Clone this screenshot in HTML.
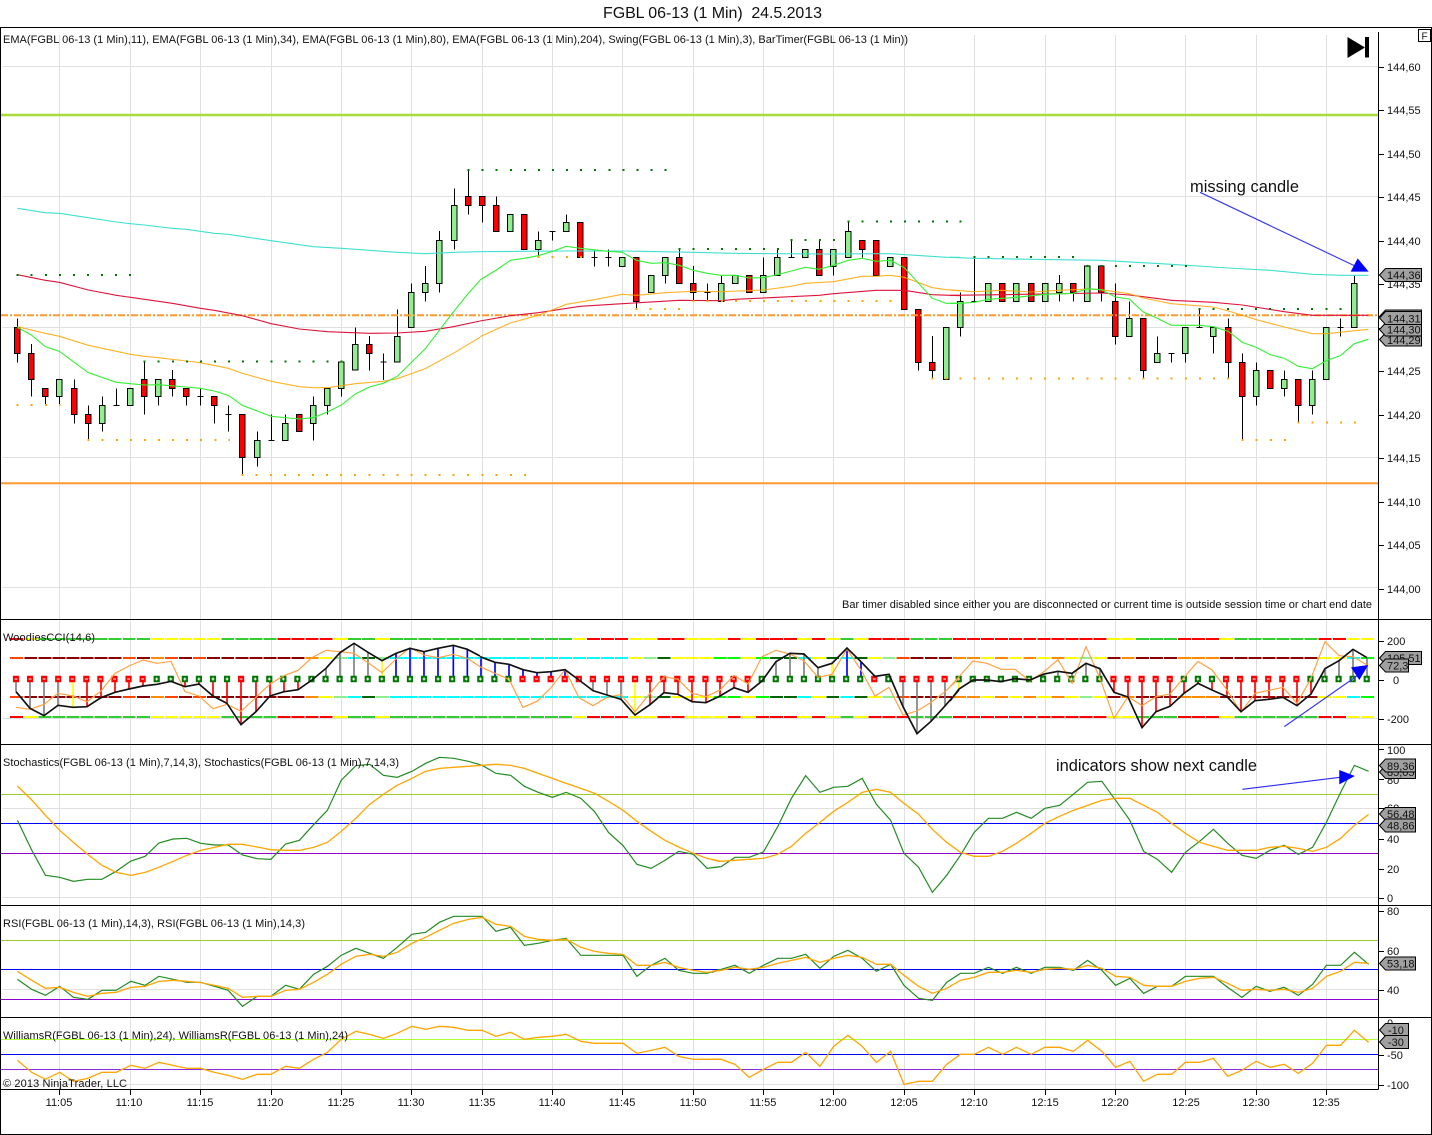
<!DOCTYPE html>
<html><head><meta charset="utf-8"><title>FGBL 06-13 (1 Min) 24.5.2013</title>
<style>
html,body{margin:0;padding:0;background:#fff;width:1432px;height:1135px;overflow:hidden}
svg{display:block}
text{font-family:"Liberation Sans",sans-serif;font-size:11px;fill:#111;white-space:pre}
path{fill:none}
.ns path{vector-effect:non-scaling-stroke}
.w{stroke:#000;stroke-width:3;shape-rendering:crispEdges}
.r{fill:#f00;stroke:#000;stroke-width:3;shape-rendering:crispEdges}
.g{fill:#90ee90;stroke:#000;stroke-width:3;shape-rendering:crispEdges}
.t{fill:#a0a0a0;stroke:#000;stroke-width:1}
.cy{stroke:#40e0d0;stroke-width:3.3}
.cr{stroke:#dc143c;stroke-width:3.3}
.or{stroke:#ffa500;stroke-width:3.3;opacity:.85}
.li{stroke:#33f033;stroke-width:3.3}
.dg{stroke:#007700;stroke-width:6;stroke-dasharray:6 36.21;shape-rendering:crispEdges}
.do{stroke:#ffa500;stroke-width:6;stroke-dasharray:6 36.21;shape-rendering:crispEdges}
.hg{stroke:#808080;stroke-width:5}.hy{stroke:#ff0;stroke-width:5}.hr{stroke:#f00;stroke-width:5}.hb{stroke:#00f;stroke-width:5}
.bk{stroke:#111;stroke-width:5}
.to{stroke:#ffa040;stroke-width:3.5}
.sg{stroke:#228b22;stroke-width:1.2}
.so{stroke:#ffa500;stroke-width:1.3}
.d{stroke-dasharray:.92 .08;stroke-width:2;shape-rendering:crispEdges}
</style></head><body>
<svg width="1432" height="1135" viewBox="0 0 1432 1135" xmlns="http://www.w3.org/2000/svg">
<rect width="1432" height="1135" fill="#fff"/>
<text x="603" y="18" textLength="219" lengthAdjust="spacing" style="font-size:16px">FGBL 06-13 (1 Min)  24.5.2013</text>

<!-- grid -->
<path stroke="#e0e0e0" d="M59.5 35V1089M130.5 35V1089M200.5 35V1089M271.5 35V1089M341.5 35V1089M411.5 35V1089M482.5 35V1089M552.5 35V1089M622.5 35V1089M693.5 35V1089M763.5 35V1089M833.5 35V1089M904.5 35V1089M974.5 35V1089M1045.5 35V1089M1115.5 35V1089M1185.5 35V1089M1256.5 35V1089M1326.5 35V1089"/>
<path stroke="#e0e0e0" d="M2 66.5H1378M2 196.5H1378M2 327.5H1378M2 457.5H1378M2 587.5H1378M2 718.5H1378M2 808.5H1378M2 897.5H1378M2 989.5H1378M2 1084.5H1378"/>

<!-- candles 1 -->
<g transform="translate(0,140) scale(.33333)">
<path class="w" d="M52 535V668M94 612V770M136 745V795M178 718V795M223 718V850M265 796V897M307 769V875M349 745V796M340 796H358M433 666V823M475 718V797M517 690V770M559 745V797M601 745V797M592 769H610M643 769V850M685 796V875M676 823H694M727 823V1005M772 875V980M814 823V901M805 901H823M856 823V901M940 769V901M982 745V823M1024 666V770M1066 562V690M1108 588V692M1150 640V720M1141 666H1159M1192 508V666M1234 430V562M1276 378V485M1318 273V458M1363 145V328M1405 90V224"/>
<path class="r" d="M44 562h16v78h-16zM86 640h16v78h-16zM128 745h16v24h-16zM215 745h16v78h-16zM257 823h16v27h-16zM425 718h16v51h-16zM509 718h16v27h-16zM551 745h16v24h-16zM635 769h16v27h-16zM719 823h16v129h-16zM890 823h16v52h-16zM1100 613h16v27h-16zM1397 169h16v27h-16z"/>
<path class="g" d="M170 718h16v51h-16zM299 796h16v54h-16zM383 745h16v51h-16zM467 718h16v51h-16zM764 901h16v51h-16zM848 850h16v51h-16zM932 796h16v54h-16zM974 745h16v51h-16zM1016 666h16v79h-16zM1058 613h16v77h-16zM1184 589h16v77h-16zM1226 457h16v105h-16zM1268 430h16v27h-16zM1310 301h16v129h-16zM1355 196h16v105h-16z"/>
</g>
<!-- candles 2 -->
<g transform="translate(480,140) scale(.33333)">
<path class="w" d="M7 196V248M49 169V196M175 274V350M217 274V302M208 274H226M259 223V247M343 328V380M334 352H352M385 328V380M376 352H394M469 485V505M556 406V431M598 325V352M640 378V483M682 430V483M673 457H691M724 406V485M850 352V406M892 325V352M934 300V352M925 352H943M1018 300V328M1060 379V406M1105 245V274M1147 328V352M1315 667V692M1357 588V716"/>
<path class="r" d="M-1 169h16v27h-16zM41 196h16v78h-16zM125 223h16v105h-16zM293 247h16v105h-16zM461 352h16v133h-16zM590 352h16v78h-16zM632 430h16v27h-16zM800 406h16v51h-16zM1010 328h16v78h-16zM1139 301h16v27h-16zM1181 301h16v105h-16zM1265 352h16v156h-16zM1307 508h16v159h-16zM1349 667h16v24h-16z"/>
<path class="g" d="M83 223h16v51h-16zM167 301h16v27h-16zM251 247h16v27h-16zM419 352h16v27h-16zM506 406h16v51h-16zM548 352h16v54h-16zM716 430h16v54h-16zM758 406h16v24h-16zM842 406h16v51h-16zM884 352h16v54h-16zM968 328h16v24h-16zM1052 328h16v51h-16zM1097 274h16v78h-16zM1223 352h16v27h-16zM1391 562h16v156h-16z"/>
</g>
<!-- candles 3 -->
<g transform="translate(950,140) scale(.33333)">
<path class="w" d="M31 457V484M31 562V590M73 352V484M64 484H82M328 405V430M328 457V485M370 457V485M454 457V485M496 430V484M496 589V614M538 484V535M580 691V715M622 589V640M664 640V668M655 640H673M706 640V668M748 505V562M739 562H757M790 589V640M835 535V562M835 667V716M877 640V667M877 769V897M919 667V691M919 769V797M1003 691V718M1003 745V770M1045 796V848M1087 691V718M1087 796V823M1171 535V590M1162 562H1180M1213 405V430"/>
<path class="g" d="M23 484h16v78h-16zM107 430h16v54h-16zM191 430h16v54h-16zM278 430h16v54h-16zM320 430h16v27h-16zM404 378h16v106h-16zM530 535h16v54h-16zM614 640h16v27h-16zM698 562h16v78h-16zM782 562h16v27h-16zM911 691h16v78h-16zM995 718h16v27h-16zM1079 718h16v78h-16zM1121 562h16v156h-16zM1205 430h16v132h-16z"/>
<path class="r" d="M149 430h16v54h-16zM236 430h16v54h-16zM362 430h16v27h-16zM446 378h16v79h-16zM488 484h16v105h-16zM572 535h16v156h-16zM827 562h16v105h-16zM869 667h16v102h-16zM953 691h16v54h-16zM1037 718h16v78h-16z"/>
</g>

<!-- levels -->
<path stroke="#a8dc38" stroke-width="2.6" d="M1 115H1378"/>
<path stroke="#ff9a30" stroke-width="2" d="M1 483.3H1378"/>
<path stroke="#ff9a30" stroke-width="2" stroke-dasharray="7 2 2 2" d="M1 315.3H1378"/>

<!-- EMAs + dots -->
<g transform="translate(0,140) scale(.33333)">
<path class="cy" d="M52 205L136 218 178 220 265 233 349 246 391 251 433 255 517 265 559 268 601 274 643 280 685 283 772 296 814 302 898 314 940 320 1024 325 1108 331 1192 337 1276 341 1363 337 1440 335"/>
<path class="cr" d="M52 404L136 421 178 427 265 450 349 466 433 478 517 490 601 505 643 511 727 527 814 551 898 567 982 575 1108 580 1192 579 1276 574 1360 560 1440 543"/>
<path class="or" d="M52 560L136 580 178 589 265 616 349 634 391 643 433 649 475 653 559 663 601 668 685 685 727 700 814 724 898 740 940 743 982 743 1066 731 1150 724 1192 716 1276 686 1360 640 1440 592"/>
<path class="li" d="M52 562L94 585 136 620 178 634 265 698 349 727 391 731 433 735 475 734 559 741 601 745 643 753 685 766 727 796 814 829 898 837 940 833 982 816 1024 795 1066 762 1108 741 1150 730 1192 709 1276 626 1360 516 1405 460 1440 421"/>
<path class="dg" d="M50 405H396M431 665H1030M1403 90H1409"/>
<path class="do" d="M50 795H182M263 900H690M725 1005H1410"/>
</g>
<g transform="translate(480,140) scale(.33333)">
<path class="cy" d="M0 335L259 333 427 333 640 337 760 340 1018 342 1231 341 1400 352 1440 352"/>
<path class="cr" d="M0 543L91 527 175 518 301 499 427 491 598 481 724 482 766 478 1018 466 1060 461 1189 451 1273 451 1357 464 1440 467"/>
<path class="or" d="M0 590L91 549 175 526 259 493 343 479 427 463 469 466 556 458 640 454 724 455 850 450 934 439 976 430 1060 425 1147 409 1189 409 1231 406 1273 412 1357 443 1399 449 1440 452"/>
<path class="li" d="M0 420L49 390 91 361 133 355 175 347 217 334 259 319 301 325 385 334 427 337 469 361 514 370 556 368 598 376 640 391 682 400 724 406 766 406 808 414 850 413 892 404 934 393 976 382 1018 388 1060 376 1105 361 1147 355 1189 364 1231 361 1273 383 1357 475 1399 490 1440 490"/>
<path class="dg" d="M5 90H562M596 327H898M932 300H1066M1103 245H1405"/>
<path class="do" d="M5 1005H139M173 351H307M467 507H604M638 483H1237M1355 716H1405"/>
</g>
<g transform="translate(950,140) scale(.33333)">
<path class="cy" d="M0 352L73 355 244 358 454 361 664 373 835 384 961 391 1087 403 1171 406 1255 406"/>
<path class="cr" d="M0 466L160 464 454 459 538 465 664 481 790 487 877 495 1003 515 1087 526 1255 526"/>
<path class="or" d="M0 450L73 455 157 451 244 456 328 451 412 447 454 449 538 461 580 474 664 491 790 501 835 513 919 539 1003 561 1087 581 1129 581 1255 568"/>
<path class="li" d="M0 490L31 490 73 487 115 478 199 472 286 463 370 460 412 446 454 449 496 471 538 477 580 516 622 535 664 556 748 556 790 560 835 574 877 607 919 622 961 644 1003 655 1045 679 1087 686 1129 662 1171 647 1213 611 1255 598"/>
<path class="dg" d="M29 245H36M71 351H376M410 378H712M746 507H1177"/>
<path class="do" d="M29 716H840M875 900H1008M1043 848H1218"/>
<path stroke="#3a3af0" stroke-width="3.5" d="M750 157L1215 378"/>
<path style="fill:#00f" d="M1223 355L1256 395 1202 395Z"/>
</g>

<!-- CCI rows -->
<g transform="translate(16.7,0) scale(14.07,1)">
<g transform="translate(0,639)">
<path class="d" stroke="#f00" d="M-.46 0H.46M18.54 0H22.46M40.54 0H43.46M45.54 0H47.46M50.54 0H51.46M52.54 0H55.46M56.54 0H57.46M60.54 0H63.46M66.54 0H77.46M82.54 0H85.46M92.54 0H94.46"/>
<path class="d" stroke="#ff0" d="M.54 0H1.46M9.54 0H14.46M22.54 0H23.46M25.54 0H26.46M39.54 0H40.46M43.54 0H45.46M47.54 0H50.46M51.54 0H52.46M55.54 0H56.46M57.54 0H58.46M59.54 0H60.46M77.54 0H79.46M85.54 0H86.46M94.54 0H96.46"/>
<path class="d" stroke="#32cd32" d="M1.54 0H9.46M14.54 0H18.46M23.54 0H25.46M26.54 0H39.46M58.54 0H59.46M63.54 0H66.46M79.54 0H82.46M86.54 0H92.46"/>
</g>
<g transform="translate(0,717)">
<path class="d" stroke="#f00" d="M-.46 0H.46M18.54 0H22.46M40.54 0H43.46M45.54 0H47.46M50.54 0H51.46M52.54 0H55.46M56.54 0H57.46M60.54 0H63.46M66.54 0H77.46M82.54 0H85.46M92.54 0H94.46"/>
<path class="d" stroke="#ff0" d="M.54 0H1.46M9.54 0H14.46M22.54 0H23.46M25.54 0H26.46M39.54 0H40.46M43.54 0H45.46M47.54 0H50.46M51.54 0H52.46M55.54 0H56.46M57.54 0H58.46M59.54 0H60.46M77.54 0H79.46M85.54 0H86.46M94.54 0H96.46"/>
<path class="d" stroke="#32cd32" d="M1.54 0H9.46M14.54 0H18.46M23.54 0H25.46M26.54 0H39.46M58.54 0H59.46M63.54 0H66.46M79.54 0H82.46M86.54 0H92.46"/>
</g>
<g transform="translate(0,658)">
<path class="d" stroke="#ff4500" d="M-.46 0H.46M7.54 0H8.46M10.54 0H11.46M12.54 0H13.46M62.54 0H63.46"/>
<path class="d" stroke="#8b0000" d="M.54 0H7.46M8.54 0H9.46M11.54 0H12.46M13.54 0H20.46M63.54 0H66.46M77.54 0H78.46M79.54 0H82.46M85.54 0H92.46"/>
<path class="d" stroke="#ff8c00" d="M9.54 0H10.46M20.54 0H21.46M66.54 0H68.46M69.54 0H70.46M71.54 0H72.46M73.54 0H74.46M78.54 0H79.46M82.54 0H85.46"/>
<path class="d" stroke="#ff0" d="M21.54 0H22.46M43.54 0H44.46M46.54 0H49.46M51.54 0H52.46M56.54 0H57.46M60.54 0H61.46M68.54 0H69.46M70.54 0H71.46M72.54 0H73.46M74.54 0H75.46M76.54 0H77.46M92.54 0H94.46"/>
<path class="d" stroke="#90ee90" d="M22.54 0H23.46M25.54 0H26.46M44.54 0H45.46M61.54 0H62.46M75.54 0H76.46"/>
<path class="d" stroke="#0ff" d="M23.54 0H24.46M26.54 0H43.46M55.54 0H56.46M58.54 0H59.46M94.54 0H95.46"/>
<path class="d" stroke="#006400" d="M24.54 0H25.46M45.54 0H46.46M53.54 0H55.46M57.54 0H58.46M59.54 0H60.46"/>
<path class="d" stroke="#0f0" d="M49.54 0H51.46M52.54 0H53.46M95.54 0H96.46"/>
</g>
<g transform="translate(0,697)">
<path class="d" stroke="#ff4500" d="M-.46 0H.46M7.54 0H8.46M10.54 0H11.46M12.54 0H13.46M62.54 0H63.46"/>
<path class="d" stroke="#8b0000" d="M.54 0H7.46M8.54 0H9.46M11.54 0H12.46M13.54 0H20.46M63.54 0H66.46M77.54 0H78.46M79.54 0H82.46M85.54 0H92.46"/>
<path class="d" stroke="#ff8c00" d="M9.54 0H10.46M20.54 0H21.46M66.54 0H68.46M69.54 0H70.46M71.54 0H72.46M73.54 0H74.46M78.54 0H79.46M82.54 0H85.46"/>
<path class="d" stroke="#ff0" d="M21.54 0H22.46M43.54 0H44.46M46.54 0H49.46M51.54 0H52.46M56.54 0H57.46M60.54 0H61.46M68.54 0H69.46M70.54 0H71.46M72.54 0H73.46M74.54 0H75.46M76.54 0H77.46M92.54 0H94.46"/>
<path class="d" stroke="#90ee90" d="M22.54 0H23.46M25.54 0H26.46M44.54 0H45.46M61.54 0H62.46M75.54 0H76.46"/>
<path class="d" stroke="#0ff" d="M23.54 0H24.46M26.54 0H43.46M55.54 0H56.46M58.54 0H59.46M94.54 0H95.46"/>
<path class="d" stroke="#006400" d="M24.54 0H25.46M45.54 0H46.46M53.54 0H55.46M57.54 0H58.46M59.54 0H60.46"/>
<path class="d" stroke="#0f0" d="M49.54 0H51.46M52.54 0H53.46M95.54 0H96.46"/>
</g>
</g>

<!-- CCI histograms + lines -->
<g transform="translate(0,620) scale(.33333)">
<path class="hg" d="M48 176V215M90 176V265M132 176V287M174 176V256M936 176V180M978 176V145M1020 176V97M1062 176V70M1104 176V97"/>
<path class="hy" d="M219 176V262M1146 176V122"/>
<path class="hr" d="M261 176V260M303 176V233M345 176V217M387 176V207M429 176V198M555 176V200M597 176V192M639 176V228M681 176V250M723 176V313M768 176V275M810 176V228M852 176V215M894 176V209"/>
<path class="hb" d="M1188 176V100M1230 176V85M1272 176V95M1314 176V85M1360 176V76M1402 176V88"/>
</g>
<g transform="translate(480,620) scale(.33333)">
<path class="hb" d="M3 176V115M45 176V127M87 176V133M129 176V149M171 176V158M213 176V155M255 176V149M1101 176V84M1143 176V125"/>
<path class="hg" d="M339 176V212M381 176V225M423 176V238M888 176V125M930 176V100M972 176V102M1014 176V143M1269 176V260M1311 176V341M1353 176V304M1395 176V258"/>
<path class="hy" d="M465 176V285M1056 176V130M1437 176V210"/>
<path class="hr" d="M510 176V254M552 176V218M594 176V223M636 176V245M678 176V248M720 176V228M762 176V203M804 176V217"/>
</g>
<g transform="translate(950,620) scale(.33333)">
<path class="hy" d="M27 176V207"/>
<path class="hg" d="M282 176V162M324 176V154M366 176V160M408 176V130M450 176V146M1125 176V146M1167 176V122M1209 176V88M1251 176V113"/>
<path class="hr" d="M492 176V217M534 176V231M576 176V323M618 176V275M660 176V259M702 176V220M744 176V190M786 176V210M831 176V230M873 176V275M915 176V242M957 176V238M999 176V232M1041 176V257M1083 176V222"/>
</g>

<!-- markers -->
<g transform="translate(16,679) scale(14.07,1)">
<path stroke="#f00" stroke-width="6.5" stroke-dasharray=".44 .56" d="M-.22 0H9.22M15.78 0H16.22M35.78 0H52.22M60.78 0H61.22M62.78 0H66.22M77.78 0H82.22M85.78 0H91.22"/>
<path stroke="#007700" stroke-width="6.5" stroke-dasharray=".44 .56" d="M9.78 0H15.22M16.78 0H35.22M52.78 0H60.22M61.78 0H62.22M66.78 0H77.22M82.78 0H85.22M91.78 0H96.22"/>
<path stroke="#fff" stroke-width="1" stroke-dasharray=".2 .8" d="M-.1 0H96.1"/>
<path stroke="#fff" stroke-width="3" stroke-dasharray=".07 .93" d="M9.965 0H15.04M16.965 0H35.04M52.965 0H60.04M61.965 0H62.04M66.965 0H77.04M82.965 0H85.04M91.965 0H96.04"/>
</g>

<g transform="translate(0,620) scale(.33333)">
<path class="to" d="M48 262L90 268 132 253 174 220 219 228 261 245 303 213 345 160 387 138 429 120 471 130 513 124 555 215 597 228 639 266 681 253 723 274 768 232 810 192 852 167 894 151 936 113 978 91 1020 95 1062 100 1104 128 1146 158 1188 117 1230 83 1272 105 1314 113 1360 103 1402 115 1440 140"/>
<path class="bk" d="M48 215L90 265 132 287 174 256 219 262 261 260 303 233 345 217 387 207 429 198 471 193 513 184 555 200 597 192 639 228 681 250 723 314 768 275 810 228 852 215 894 209 936 180 978 145 1020 98 1062 70 1104 97 1146 122 1188 100 1230 85 1272 95 1314 85 1360 76 1402 88 1440 108"/>
</g>
<g transform="translate(480,620) scale(.33333)">
<path class="to" d="M0 140L45 160 87 178 129 262 171 244 213 203 255 149 297 233 339 257 381 232 423 224 465 275 510 220 552 170 594 178 636 220 678 230 720 210 762 166 804 192 846 110 888 91 930 102 972 123 1014 172 1056 163 1101 87 1143 150 1185 228 1227 202 1269 285 1311 273 1353 247 1395 215 1437 175"/>
<path class="bk" d="M0 110L45 127 87 133 129 149 171 158 213 155 255 149 297 180 339 212 381 225 423 238 465 285 510 254 552 218 594 223 636 245 678 248 720 228 762 203 804 217 846 183 888 125 930 100 972 102 1014 143 1056 130 1101 84 1143 125 1185 169 1227 163 1269 260 1311 341 1353 304 1395 258 1437 210"/>
</g>
<g transform="translate(950,620) scale(.33333)">
<path class="to" d="M0 200L27 170 69 123 111 130 153 148 195 148 240 183 282 155 324 119 366 190 408 80 450 175 492 295 534 230 576 257 618 230 660 222 702 172 744 124 786 150 831 210 873 277 915 220 957 211 999 202 1041 250 1083 175 1125 65 1167 107 1209 110 1251 135"/>
<path class="bk" d="M0 243L27 207 69 180 111 180 153 185 195 176 240 180 282 162 324 154 366 160 408 130 450 146 492 217 534 231 576 323 618 275 660 259 702 220 744 190 786 210 831 230 873 275 915 242 957 238 999 232 1041 257 1083 222 1125 146 1167 122 1209 88 1251 113"/>
<path stroke="#3a3af0" stroke-width="3.5" d="M1003 320L1225 165"/>
<path style="fill:#00f" d="M1203 142L1255 135 1228 180Z"/>
</g>

<!-- lower panel levels -->
<path stroke="#9acd32" d="M1 794.5H1378M1 940.5H1378"/>
<path stroke="#00f" d="M1 823.5H1378M1 969.5H1378M1 1054.5H1378"/>
<path stroke="#9400d3" d="M1 853.5H1378M1 999.5H1378"/>
<path stroke="#adff2f" d="M1 1039.5H1378"/>
<path stroke="#8a2be2" d="M1 1069.5H1378"/>

<g class="ns" transform="translate(0,745) scale(.45918,.33333)">
<path class="sg" d="M38 226L69 315 99 391 130 397 160 409 191 403 222 403 253 379 285 348 316 334 346 294 377 282 407 280 437 295 467 300 497 300 528 330 560 341 590 343 622 297 652 286 683 239 713 196 743 106 775 62 805 58 835 91 865 97 897 79 927 55 957 37 988 40 1020 49 1050 61 1080 85 1112 91 1142 124 1172 142 1203 157 1233 142 1265 160 1295 200 1325 262 1357 302 1387 358 1418 370 1448 346 1478 319 1510 328 1540 370 1568 365"/>
<path class="so" d="M38 123L69 165 99 211 130 256 160 292 191 328 222 361 253 382 285 391 316 382 346 367 377 349 407 331 437 316 467 307 497 298 528 298 560 306 590 314 622 316 652 316 683 307 713 292 743 259 775 220 805 178 835 148 865 121 897 100 927 79 957 70 988 67 1020 64 1050 61 1080 58 1112 61 1142 70 1172 85 1203 100 1233 115 1265 130 1295 145 1325 169 1357 196 1387 229 1418 259 1448 286 1478 306 1510 325 1540 340 1568 350"/>
<path class="sg" d="M38 703L69 733 99 751 130 724 160 757 191 763 222 736 253 736 285 709 316 721 346 694 377 703 407 712 437 712 467 724 497 736 528 784 560 754 590 754 622 721 652 733 683 688 713 664 743 631 775 610 805 625 835 640 865 607 897 568 927 562 957 532 988 514 1020 514 1050 514 1080 559 1112 547 1142 601 1172 595 1203 586 1233 580 1265 631 1295 631 1325 631 1357 631 1387 694 1418 661 1448 640 1478 676 1510 685 1540 685 1568 673"/>
<path class="so" d="M38 679L69 706 99 730 130 727 160 742 191 754 222 745 253 742 285 727 316 724 346 709 377 706 407 709 437 713 467 721 497 730 528 757 560 754 590 754 622 736 652 733 683 712 713 688 743 658 775 634 805 628 835 634 865 622 897 595 927 577 957 556 988 535 1020 523 1050 517 1080 538 1112 544 1142 574 1172 583 1203 586 1233 583 1265 607 1295 619 1325 625 1357 628 1387 661 1418 661 1448 652 1478 667 1510 676 1540 682 1568 676"/>
<path class="so" d="M38 946L69 982 99 1003 130 982 160 1009 191 1000 222 982 253 982 285 961 316 970 346 952 377 961 407 970 437 970 467 982 497 991 528 1003 560 988 590 988 622 964 652 970 683 943 713 922 743 883 775 859 805 868 835 880 865 865 897 844 927 853 957 844 988 847 1020 856 1050 856 1080 874 1112 862 1142 883 1172 877 1203 874 1233 868 1265 889 1295 895 1325 895 1357 895 1387 925 1418 916 1448 907 1478 934 1510 943 1540 943 1568 943"/>
</g>
<g class="ns" transform="translate(712,745) scale(.45918,.33333)">
<path class="sg" d="M0 368L20 365 50 337 81 337 112 321 143 245 173 160 204 92 235 142 265 127 296 124 327 100 358 178 389 226 418 325 450 367 480 442 511 391 541 331 571 262 602 220 633 220 663 202 695 220 725 190 757 181 787 148 818 112 849 109 879 166 910 226 940 319 970 343 1001 382 1031 322 1062 289 1092 253 1123 295 1154 331 1185 340 1215 316 1246 301 1277 328 1308 307 1338 232 1369 142 1399 61 1430 79"/>
<path class="so" d="M0 343L20 349 50 346 81 343 112 340 143 328 173 304 204 265 235 232 265 199 296 172 327 142 358 133 389 142 418 175 450 208 480 253 511 292 541 322 571 334 602 334 633 319 663 295 695 265 725 235 757 214 787 196 818 181 849 166 879 160 910 160 940 181 970 202 1001 235 1031 265 1062 292 1092 304 1123 316 1154 316 1185 316 1215 307 1246 304 1277 310 1308 319 1338 307 1369 280 1399 241 1430 208"/>
<path class="sg" d="M0 682L20 673 50 661 81 685 112 661 143 640 173 640 204 628 235 670 265 634 296 616 327 640 358 679 389 658 418 721 450 760 480 766 511 712 541 685 571 685 602 667 633 685 663 667 695 685 725 667 757 667 787 676 818 646 849 676 879 721 910 700 940 745 970 724 1001 724 1031 694 1062 694 1092 694 1123 727 1154 757 1185 724 1215 739 1246 727 1277 751 1308 718 1338 661 1369 661 1399 622 1430 658"/>
<path class="so" d="M0 679L20 676 50 667 81 673 112 667 143 655 173 646 204 637 235 652 265 640 296 631 327 637 358 658 389 658 418 691 450 724 480 745 511 730 541 706 571 697 602 682 633 682 663 676 695 682 725 673 757 670 787 673 818 661 849 670 879 694 910 697 940 721 970 724 1001 724 1031 709 1062 700 1092 697 1123 715 1154 736 1185 733 1215 736 1246 733 1277 742 1308 730 1338 694 1369 679 1399 652 1430 655"/>
<path class="so" d="M0 943L20 943 50 958 81 997 112 973 143 952 173 952 204 922 235 964 265 904 296 871 327 904 358 952 389 919 418 1018 450 1009 480 1009 511 958 541 928 571 928 602 907 633 928 663 907 695 928 725 907 757 907 787 919 818 886 849 919 879 967 910 949 940 1009 970 988 1001 988 1031 952 1062 952 1092 940 1123 994 1154 976 1185 949 1215 967 1246 958 1277 985 1308 955 1338 901 1369 901 1399 856 1430 892"/>
<path stroke="#2a2af0" stroke-width="1.2" d="M1155 133L1368 97"/>
<path style="fill:#00f" d="M1366 75L1400 93 1366 118Z"/>
</g>

<!-- frame -->
<path stroke="#000" d="M0 27.5H1432M.5 27V1135M1431.5 27V1135M0 1134.5H1432M0 619.5H1432M0 744.5H1432M0 905.5H1432M0 1017.5H1432M0 1089.5H1378.5M1378.5 32V1089.5"/>
<rect x="1418.5" y="29.5" width="12" height="12" fill="#fff" stroke="#000"/>
<text x="1421.5" y="39.5" style="font-size:10px">F</text>
<path style="fill:#000" d="M1347.5 37L1365 47.5 1347.5 58Z"/>
<path style="fill:#000" d="M1365 37h4v20.5h-4z"/>

<!-- ticks -->
<path stroke="#000" d="M1378 67.5h6M1378 110.5h6M1378 154.5h6M1378 197.5h6M1378 241.5h6M1378 284.5h6M1378 328.5h6M1378 371.5h6M1378 415.5h6M1378 458.5h6M1378 502.5h6M1378 545.5h6M1378 589.5h6M1378 641.5h6M1378 680.5h6M1378 719.5h6M1378 749.5h6M1378 779.5h6M1378 808.5h6M1378 839.5h6M1378 869.5h6M1378 898.5h6M1378 911.5h6M1378 951.5h6M1378 990.5h6M1378 1055.5h6M1378 1085.5h6"/>
<path stroke="#000" d="M59.5 1089v6M130.5 1089v6M200.5 1089v6M271.5 1089v6M341.5 1089v6M411.5 1089v6M482.5 1089v6M552.5 1089v6M622.5 1089v6M693.5 1089v6M763.5 1089v6M833.5 1089v6M904.5 1089v6M974.5 1089v6M1045.5 1089v6M1115.5 1089v6M1185.5 1089v6M1256.5 1089v6M1326.5 1089v6"/>

<!-- axis labels -->
<text x="1387" y="71">144,60</text><text x="1387" y="114">144,55</text><text x="1387" y="158">144,50</text><text x="1387" y="201">144,45</text><text x="1387" y="245">144,40</text><text x="1387" y="288">144,35</text><text x="1387" y="375">144,25</text><text x="1387" y="419">144,20</text><text x="1387" y="462">144,15</text><text x="1387" y="506">144,10</text><text x="1387" y="549">144,05</text><text x="1387" y="593">144,00</text>
<text x="1387" y="645">200</text><text x="1393" y="684">0</text><text x="1387" y="723">-200</text>
<text x="1387" y="754">100</text><text x="1387" y="784">80</text><text x="1387" y="812">60</text><text x="1387" y="843">40</text><text x="1387" y="873">20</text><text x="1387" y="902">0</text>
<text x="1387" y="915">80</text><text x="1387" y="955">60</text><text x="1387" y="994">40</text>
<text x="1387" y="1027">0</text><text x="1387" y="1059">-50</text><text x="1387" y="1089">-100</text>

<g style="text-anchor:middle">
<text x="59" y="1106">11:05</text><text x="129" y="1106">11:10</text><text x="200" y="1106">11:15</text><text x="270" y="1106">11:20</text><text x="341" y="1106">11:25</text><text x="411" y="1106">11:30</text><text x="482" y="1106">11:35</text><text x="552" y="1106">11:40</text><text x="622" y="1106">11:45</text><text x="693" y="1106">11:50</text><text x="763" y="1106">11:55</text><text x="833" y="1106">12:00</text><text x="904" y="1106">12:05</text><text x="974" y="1106">12:10</text><text x="1045" y="1106">12:15</text><text x="1115" y="1106">12:20</text><text x="1186" y="1106">12:25</text><text x="1256" y="1106">12:30</text><text x="1326" y="1106">12:35</text>
</g>

<!-- value tags -->
<path class="t" d="M1379.5 275L1385.5 268.5H1421.5V281.5H1385.5Z"/><text x="1387" y="279">144,36</text>
<path class="t" d="M1379.5 339.5L1385.5 333H1421.5V346H1385.5Z"/><text x="1387" y="344">144,29</text>
<path class="t" d="M1379.5 329.5L1385.5 323H1421.5V336H1385.5Z"/><text x="1387" y="333.5">144,30</text>
<path class="t" d="M1379.5 316.5L1385.5 310H1421.5V323H1385.5Z"/>
<path class="t" d="M1379.5 318L1385.5 311.5H1421.5V324.5H1385.5Z"/><text x="1387" y="322.5">144,31</text>
<path class="t" d="M1379.5 658L1385.5 651.5H1421.5V664.5H1385.5Z"/><text x="1387" y="662">105,51</text>
<path class="t" d="M1379.5 665.5L1385.5 659H1408.5V672H1385.5Z"/><text x="1387" y="669.5">72,3</text>
<path class="t" d="M1379.5 772L1385.5 765.5H1415.5V778.5H1385.5Z"/><text x="1387" y="776">85,05</text>
<path class="t" d="M1379.5 765.5L1385.5 759H1415.5V772H1385.5Z"/><text x="1387" y="770">89,36</text>
<path class="t" d="M1379.5 814L1385.5 807.5H1415.5V820.5H1385.5Z"/><text x="1387" y="818">56,48</text>
<path class="t" d="M1379.5 825.5L1385.5 819H1415.5V832H1385.5Z"/><text x="1387" y="829.5">48,86</text>
<path class="t" d="M1379.5 963.5L1385.5 957H1415.5V970H1385.5Z"/><text x="1387" y="967.5">53,18</text>
<path class="t" d="M1379.5 1030L1385.5 1023.5H1408.5V1036.5H1385.5Z"/><text x="1388" y="1034">-10</text>
<path class="t" d="M1379.5 1042L1385.5 1035.5H1408.5V1048.5H1385.5Z"/><text x="1388" y="1046">-30</text>

<!-- legends -->
<text x="3" y="43" textLength="905" lengthAdjust="spacing">EMA(FGBL 06-13 (1 Min),11), EMA(FGBL 06-13 (1 Min),34), EMA(FGBL 06-13 (1 Min),80), EMA(FGBL 06-13 (1 Min),204), Swing(FGBL 06-13 (1 Min),3), BarTimer(FGBL 06-13 (1 Min))</text>
<text x="842" y="608" textLength="530" lengthAdjust="spacing">Bar timer disabled since either you are disconnected or current time is outside session time or chart end date</text>
<text x="3" y="641" textLength="92" lengthAdjust="spacing">WoodiesCCI(14,6)</text>
<text x="3" y="766" textLength="396" lengthAdjust="spacing">Stochastics(FGBL 06-13 (1 Min),7,14,3), Stochastics(FGBL 06-13 (1 Min),7,14,3)</text>
<text x="3" y="927" textLength="302" lengthAdjust="spacing">RSI(FGBL 06-13 (1 Min),14,3), RSI(FGBL 06-13 (1 Min),14,3)</text>
<text x="3" y="1039" textLength="345" lengthAdjust="spacing">WilliamsR(FGBL 06-13 (1 Min),24), WilliamsR(FGBL 06-13 (1 Min),24)</text>
<text x="3" y="1087" textLength="124" lengthAdjust="spacing">© 2013 NinjaTrader, LLC</text>
<text x="1190" y="192" textLength="109" lengthAdjust="spacing" style="font-size:16.4px">missing candle</text>
<text x="1056" y="771" textLength="201" lengthAdjust="spacing" style="font-size:16.4px">indicators show next candle</text>
</svg>
</body></html>
